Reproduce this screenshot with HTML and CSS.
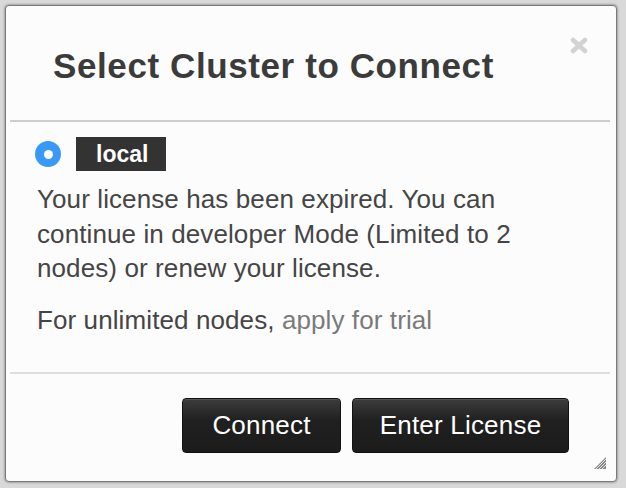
FILE: index.html
```html
<!DOCTYPE html>
<html>
<head>
<meta charset="utf-8">
<link rel="stylesheet" href="styles.css">
</head>
<body>
<div class="dialog">
  <div class="header">
    <h1 class="title">Select Cluster to Connect</h1>
    <svg class="close" width="18" height="17" viewBox="0 0 18 17">
      <path d="M3 3 L15 14 M15 3 L3 14" stroke="#d2d2d2" stroke-width="4.5" stroke-linecap="round"/>
    </svg>
  </div>
  <div class="sep"></div>
  <div class="body">
    <div class="cluster-row">
      <span class="radio"><span class="radio-dot"></span></span>
      <span class="cluster-name">local</span>
    </div>
    <p class="msg">Your license has been expired. You can continue in developer Mode (Limited to 2 nodes) or renew your license.</p>
    <p class="msg msg-trial">For unlimited nodes, <span class="link">apply for trial</span></p>
  </div>
  <div class="sep sep-light"></div>
  <div class="footer">
    <button class="btn btn-connect">Connect</button>
    <button class="btn btn-license">Enter License</button>
  </div>
  <svg class="grip" width="12" height="12" viewBox="0 0 12 12">
    <path d="M12 0 L12 12 L0 12 Z" fill="#888"/>
    <path d="M12 2 L2 12 M12 5 L5 12 M12 8 L8 12" stroke="#fcfcfc" stroke-width="0.8"/>
  </svg>
</div>
</body>
</html>
```
FILE: styles.css
```css
html, body {
  margin: 0;
  padding: 0;
}
body {
  background: #d9d9d9;
  width: 626px;
  height: 488px;
  overflow: hidden;
  font-family: "Liberation Sans", Arial, sans-serif;
}
.dialog {
  position: relative;
  margin: 5px 0 0 5px;
  width: 610px;
  height: 475px;
  border: 1px solid #7a7a7a;
  border-radius: 4px;
  background: #fcfcfc;
  box-shadow: 0 0 2px 1px rgba(0,0,0,0.25);
  display: flex;
  flex-direction: column;
}
.header {
  position: relative;
  height: 114px;
  display: flex;
  align-items: center;
  padding: 6px 0 0 47px;
  box-sizing: border-box;
}
.title {
  margin: 0;
  font-size: 35px;
  font-weight: bold;
  color: #3b3b3b;
  letter-spacing: 0.6px;
}
.close {
  position: absolute;
  top: 31px;
  right: 28px;
}
.sep {
  height: 2px;
  margin: 0 6px 0 4px;
  background: #cdcdcd;
}
.sep-light {
  background: #dedede;
}
.body {
  height: 250px;
  padding: 15px 0 0 31px;
  box-sizing: border-box;
  color: #454545;
}
.cluster-row {
  display: flex;
  align-items: center;
  gap: 15px;
  margin-left: -2px;
}
.radio {
  width: 26px;
  height: 26px;
  border-radius: 50%;
  background: #3b99f6;
  display: flex;
  align-items: center;
  justify-content: center;
}
.radio-dot {
  width: 9px;
  height: 9px;
  border-radius: 50%;
  background: #fff;
}
.cluster-name {
  background: #333;
  color: #fff;
  font-weight: bold;
  font-size: 23px;
  height: 34px;
  line-height: 34px;
  padding: 0 18px 0 20px;
}
.msg {
  margin: 11px 0 0;
  font-size: 26px;
  line-height: 34.5px;
  letter-spacing: 0.1px;
  width: 490px;
}
.msg-trial {
  margin-top: 17px;
}
.link {
  color: #7a7a7a;
}
.footer {
  flex: 1;
  display: flex;
  justify-content: flex-end;
  align-items: flex-start;
  padding: 24px 47px 0 0;
  gap: 11px;
}
.btn {
  height: 55px;
  border: 1px solid #111;
  border-radius: 4px;
  background: linear-gradient(#3c3c3c, #202020 40%, #1c1c1c);
  box-shadow: inset 0 1px 0 #555;
  color: #fff;
  font-family: "Liberation Sans", Arial, sans-serif;
  font-size: 26px;
  letter-spacing: 0.2px;
  padding: 0;
}
.btn-connect {
  width: 159px;
}
.btn-license {
  width: 217px;
}
.grip {
  position: absolute;
  right: 10px;
  bottom: 12px;
}
```
